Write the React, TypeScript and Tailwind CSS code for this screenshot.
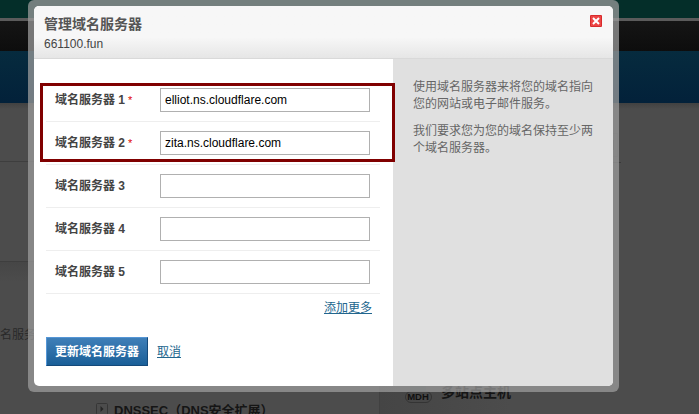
import React from 'react';

const servers = ['elliot.ns.cloudflare.com', 'zita.ns.cloudflare.com', '', '', ''];

function Backdrop() {
  return (
    <div className="flex h-full flex-col bg-[#4c4c4c]">
      <div className="h-[18px] shrink-0 bg-[#042e29]" />
      <div className="h-[3px] shrink-0 bg-[#5b5b5b]" />
      <div className="h-[30px] shrink-0 bg-gradient-to-b from-[#151515] to-[#0d0d0d]" />
      <div className="h-[52px] shrink-0 bg-gradient-to-b from-[#062b3e] to-[#03213a]" />
      <div className="h-[6px] shrink-0 bg-gradient-to-b from-[#414141] to-[#4c4c4c]" />
      <div className="flex h-[53px] shrink-0 justify-between">
        <div className="w-10 border-b border-[#3e3e3e]" />
        <div className="flex w-[99px] flex-col justify-between pt-[24px]">
          <div className="flex h-[24px] w-[18px] items-center justify-end border border-[#454545] pr-[3px]">
            <div className="h-[10px] w-[3px] bg-[#343434]" />
          </div>
        </div>
      </div>
      <div className="flex h-[100px] shrink-0 justify-between">
        <div className="w-10 border-b border-[#3e3e3e]" />
        <div className="w-[99px]">
          <div className="h-[1px] w-[21px] bg-[#3a3a3a]" />
        </div>
      </div>
      <div className="h-[20px] w-10 shrink-0 bg-gradient-to-b from-[#464646] to-[#4c4c4c]" />
      <div className="flex h-[104px] shrink-0 items-center text-[12px] text-[#292929]">
        <span className="mt-px whitespace-nowrap">名服务</span>
      </div>
      <div className="flex h-[28px] shrink-0">
        <div className="flex w-[380px] shrink-0 border-r border-[#414141] pl-[96px] pt-[17px]">
          <svg className="h-[12px] w-[12px] shrink-0" viewBox="0 0 12 12">
            <rect x=".5" y=".5" width="11" height="11" rx="1" fill="#4c4c4c" stroke="#363636" />
            <path d="M4.5 3v6l3-3z" fill="#252525" />
          </svg>
          <span className="ml-[6px] whitespace-nowrap text-[13px] font-bold leading-[16px] text-[#151515]">
            DNSSEC（DNS安全扩展）
          </span>
        </div>
        <div className="flex bg-gradient-to-r from-[#454545] to-[#4c4c4c] pl-[24px]">
          <div className="flex w-[28px] flex-col items-center">
            <div className="h-[5px] w-[16px] shrink-0 bg-[#3c4242]" />
            <div className="flex h-[12px] w-[27px] shrink-0 items-center justify-center rounded-full border border-[#343434] bg-[#474747] text-[9.5px] font-bold leading-[10px] text-[#101010]">
              MDH
            </div>
          </div>
          <span className="ml-[9px] mt-[-4px] whitespace-nowrap text-[14px] font-bold leading-[20px] text-[#151515]">
            多站点主机
          </span>
        </div>
      </div>
    </div>
  );
}

function ServerRow({ value, index }: { value: string; index: number }) {
  return (
    <div className="flex h-[43px] items-center border-b border-[#eeeeee] pl-[9px]">
      <label className="w-[105px] whitespace-nowrap text-[12px] font-bold text-[#444444]">
        域名服务器 {index + 1}
        {index < 2 && <span className="text-[11px] font-normal text-[#e00000]"> *</span>}
      </label>
      <input
        type="text"
        defaultValue={value}
        aria-label={`域名服务器 ${index + 1}`}
        className="h-[24px] w-[210px] border border-[#b0b0b0] bg-white px-1 text-[12px] text-black outline-none"
      />
    </div>
  );
}

export default function App() {
  return (
    <div className="relative h-[414px] w-[699px] overflow-hidden font-['Liberation_Sans','Noto_Sans_CJK_SC',sans-serif]">
      <Backdrop />
      <div className="absolute left-[28px] top-0 h-[392px] w-[591px] rounded-[6px] bg-[#9e9e9e]/[.73] p-[6px]">
        <div className="flex h-[380px] flex-col overflow-hidden rounded-[5px] bg-white">
          <header className="flex h-[53px] shrink-0 justify-between border-b border-[#d9d9d9] bg-gradient-to-b from-[#f7f7f7] from-60% to-[#e6e6e6] pl-[10px] pr-[11px]">
            <div className="pt-[8px]">
              <h1 className="text-[14px] font-bold leading-[20px] text-[#555555]">管理域名服务器</h1>
              <p className="pt-px text-[12px] leading-[18px] text-[#444444]">661100.fun</p>
            </div>
            <button aria-label="关闭" className="mt-[9px] h-[12px] w-[12px]">
              <svg className="h-[12px] w-[12px]" viewBox="0 0 12 12">
                <rect width="12" height="12" rx="1" fill="#d82b2c" />
                <rect x="1" y="1" width="10" height="10" fill="#ec4545" />
                <path d="M3 3l6 6M9 3L3 9" stroke="#fff" strokeWidth="2" />
              </svg>
            </button>
          </header>
          <div className="flex flex-1">
            <main className="w-[359px] pl-[12px] pr-[13px] pt-[20px]">
              {servers.map((value, index) => (
                <ServerRow key={index} value={value} index={index} />
              ))}
              <div className="flex h-[28px] items-center justify-end pr-[8px]">
                <a className="text-[12px] text-[#22668e] underline">添加更多</a>
              </div>
              <div className="mt-[15px] flex items-center gap-[9px]">
                <button className="h-[29px] w-[102px] whitespace-nowrap border border-b-[#14497a] border-l-[#5596d6] border-r-[#14497a] border-t-[#5596d6] bg-gradient-to-b from-[#3f7fb8] to-[#195f98] text-[12px] font-bold text-white">
                  更新域名服务器
                </button>
                <a className="text-[12px] text-[#22668e] underline">取消</a>
              </div>
            </main>
            <aside className="flex-1 bg-[#e0e0e0] pl-[20px] pt-[20px] text-[12px] leading-[17px] text-[#666666]">
              <p>使用域名服务器来将您的域名指向<br />您的网站或电子邮件服务。</p>
              <p className="mt-[10px]">我们要求您为您的域名保持至少两<br />个域名服务器。</p>
            </aside>
          </div>
        </div>
      </div>
      <div className="absolute left-[40px] top-[83px] h-[79px] w-[355px] border-[3px] border-[#800000]" />
    </div>
  );
}
